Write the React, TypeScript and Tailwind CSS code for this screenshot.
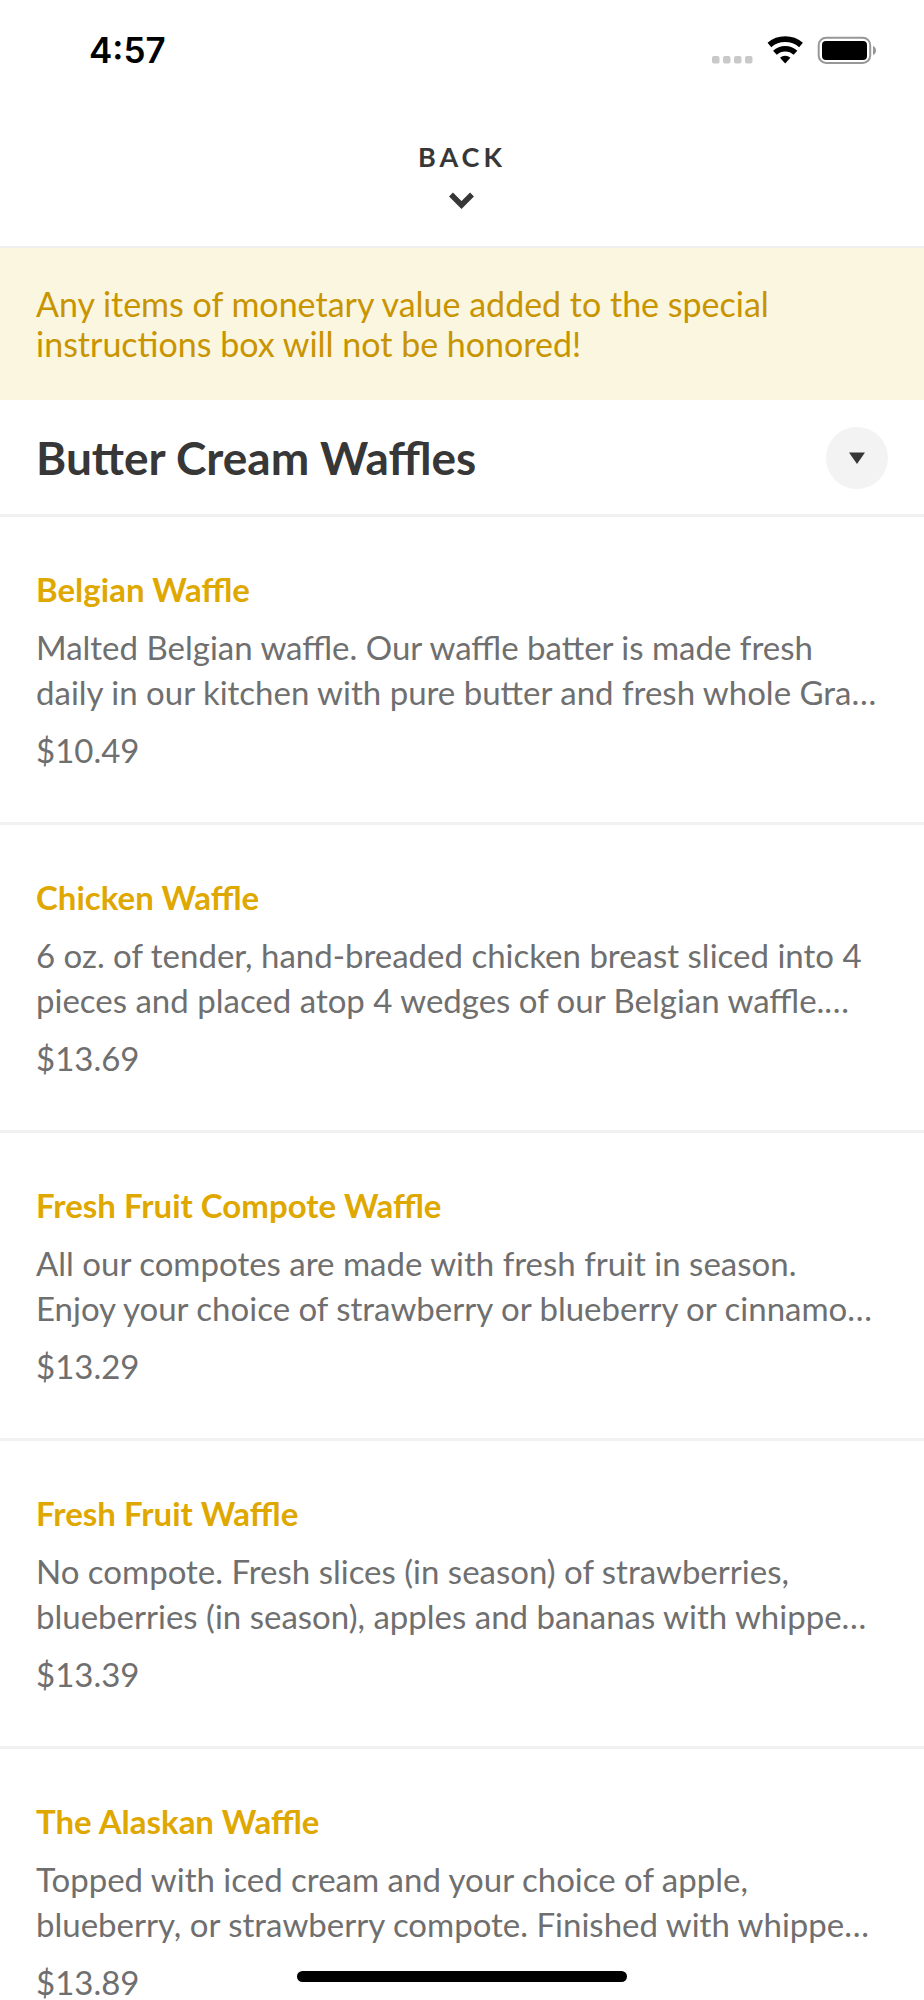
type MenuItem = { name: string; description: string; price: string };

const items: MenuItem[] = [
  {
    name: "Belgian Waffle",
    description:
      "Malted Belgian waffle. Our waffle batter is made fresh daily in our kitchen with pure butter and fresh whole Gra…",
    price: "$10.49",
  },
  {
    name: "Chicken Waffle",
    description:
      "6 oz. of tender, hand-breaded chicken breast sliced into 4 pieces and placed atop 4 wedges of our Belgian waffle.…",
    price: "$13.69",
  },
  {
    name: "Fresh Fruit Compote Waffle",
    description:
      "All our compotes are made with fresh fruit in season. Enjoy your choice of strawberry or blueberry or cinnamo…",
    price: "$13.29",
  },
  {
    name: "Fresh Fruit Waffle",
    description:
      "No compote. Fresh slices (in season) of strawberries, blueberries (in season), apples and bananas with whippe…",
    price: "$13.39",
  },
  {
    name: "The Alaskan Waffle",
    description:
      "Topped with iced cream and your choice of apple, blueberry, or strawberry compote. Finished with whippe…",
    price: "$13.89",
  },
];

function StatusBar() {
  return (
    <div className="flex h-[100px] shrink-0 items-center justify-between pr-12 pl-[89px] text-black">
      <time className="font-['Inter',sans-serif] text-[35px] leading-10 font-semibold">4:57</time>
      <svg width="168" height="30" viewBox="0 0 168 30" aria-label="Wi-Fi on, battery full">
        <g fill="#c9c9c9">
          <rect x="4" y="21" width="7.500" height="7.500" rx="2" />
          <rect x="15" y="21" width="7.500" height="7.500" rx="2" />
          <rect x="26" y="21" width="7.500" height="7.500" rx="2" />
          <rect x="37" y="21" width="7.500" height="7.500" rx="2" />
        </g>
        <g fill="none" stroke="#000">
          <path d="M61.400 10 A24.500 24.500 0 0 1 93 10" strokeWidth="5.800" />
          <path d="M66.900 17.800 A15 15 0 0 1 87.500 17.800" strokeWidth="5.400" />
        </g>
        <path d="M77.200 28.400 L72 22.700 A8 8 0 0 1 82.400 22.700 Z" fill="#000" />
        <rect x="110.700" y="2.700" width="51.500" height="25.300" rx="7.500" fill="none" stroke="#979797" strokeWidth="2" />
        <rect x="114" y="6" width="45" height="19" rx="4" fill="#000" />
        <path d="M165 11 C169 12.500 169 18.500 165 20 Z" fill="#979797" />
      </svg>
    </div>
  );
}

function MenuRow({ item }: { item: MenuItem }) {
  return (
    <li className="border-b-[3px] border-[#f1f1f1]">
      <a href="#item" className="block px-9 pt-[50px] pb-[49px]">
        <h2 className="text-[33px] leading-[45px] font-bold text-[#dfa800]">{item.name}</h2>
        <p className="mt-[13px] pr-2 text-[33px] leading-[45px] text-[#6f6f6f]">{item.description}</p>
        <p className="mt-[13px] text-[33px] leading-[45px] text-[#6f6f6f]">{item.price}</p>
      </a>
    </li>
  );
}

export default function App() {
  return (
    <div className="relative flex h-screen flex-col overflow-hidden bg-white font-['Lato',sans-serif] text-[#373737]">
      <StatusBar />
      <header className="flex h-[148px] shrink-0 justify-center border-b-2 border-[#f0f0f0] pt-10">
        <button type="button" className="flex flex-col items-center self-start">
          <span className="text-[27px] leading-[34px] font-bold tracking-[4px]">BACK</span>
          <svg className="mt-[18px]" width="26" height="17" viewBox="0 0 26 17" aria-hidden="true">
            <path d="M2 2.500 L12.500 13 L23 2.500" fill="none" stroke="#373737" strokeWidth="5.500" />
          </svg>
        </button>
      </header>
      <main className="min-h-0 flex-1 overflow-y-auto [scrollbar-width:none]">
        <p role="note" className="bg-[#fbf6e0] px-9 py-9 text-[34px] leading-10 text-[#c89400]">
          Any items of monetary value added to the special instructions box will not be honored!
        </p>
        <div className="flex h-[117px] items-center justify-between border-b-[3px] border-[#f1f1f1] px-9 pt-0.5">
          <h1 className="text-[46px] leading-[56px] font-bold">Butter Cream Waffles</h1>
          <button
            type="button"
            aria-label="Choose a menu section"
            className="flex size-[62px] shrink-0 items-center justify-center rounded-full bg-[#f3f3f3]"
          >
            <svg width="16" height="12" viewBox="0 0 16 12" aria-hidden="true">
              <path d="M0 0.500 H16 L8 12 Z" fill="#373737" />
            </svg>
          </button>
        </div>
        <ul>
          {items.map((item) => (
            <MenuRow key={item.name} item={item} />
          ))}
        </ul>
      </main>
      <div className="absolute bottom-[18px] left-1/2 h-[11px] w-[330px] -translate-x-1/2 rounded-full bg-black" />
    </div>
  );
}
